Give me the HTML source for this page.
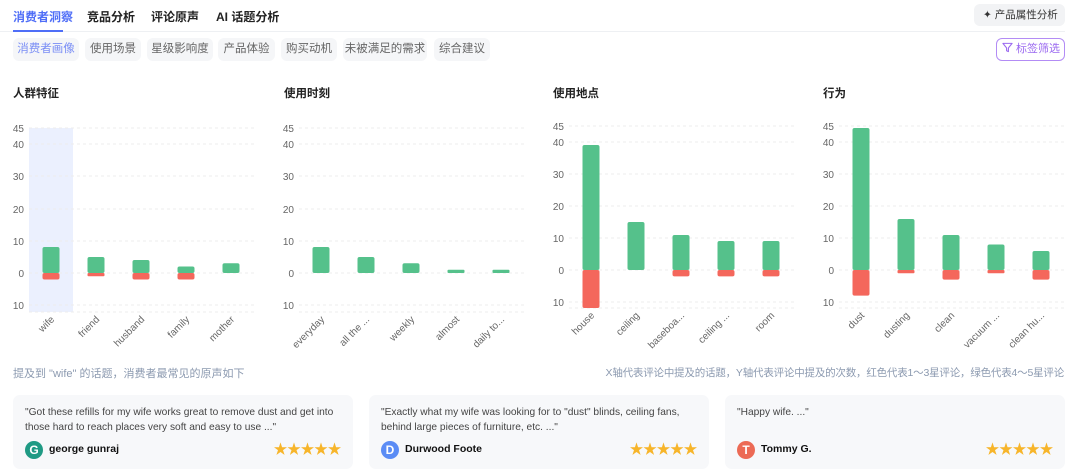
<!DOCTYPE html>
<html><head><meta charset="utf-8"><style>
*{margin:0;padding:0;box-sizing:border-box}
body{width:1080px;height:472px;background:#fff;font-family:"Liberation Sans","Noto Sans CJK SC",sans-serif;position:relative;overflow:hidden;color:#222}
.a{position:absolute;white-space:nowrap}
.tab{top:8px;font-size:12px;font-weight:bold;color:#222}
.chip{top:38px;height:23px;line-height:23px;background:#f5f6f8;border-radius:6px;font-size:11.5px;color:#666;text-align:center}
.title{top:85px;font-size:11.5px;font-weight:bold;color:#222}
.card{top:395px;height:74px;width:340px;background:#f7f8fa;border-radius:7px}
.q{position:absolute;left:12px;top:10px;font-size:10.2px;line-height:15px;color:#444;white-space:normal;width:325px}
.av{position:absolute;left:12px;top:46px;width:18px;height:18px;border-radius:50%;color:#fff;font-weight:bold;font-size:12px;text-align:center;line-height:18px}
.nm{position:absolute;left:36px;top:48px;font-size:10.5px;font-weight:bold;color:#111}
.st{position:absolute;right:12px;top:44px;font-size:14px;color:#f7b52a;letter-spacing:-0.5px}
</style></head><body>
<div class="a tab" style="left:13px;color:#4f6ef7">消费者洞察</div>
<div class="a tab" style="left:87px">竞品分析</div>
<div class="a tab" style="left:151px">评论原声</div>
<div class="a tab" style="left:216px">AI 话题分析</div>
<div class="a" style="left:0;top:31px;width:1065px;height:1px;background:#eef0f3"></div>
<div class="a" style="left:13px;top:30px;width:50px;height:2px;background:#4f6ef7"></div>
<div class="a" style="left:974px;top:4px;width:91px;height:22px;background:#f2f3f5;border-radius:6px;font-size:10.5px;line-height:22px;color:#333;padding-left:9px">✦ 产品属性分析</div>
<div class="a chip" style="left:13px;width:66px;color:#7a8ef5">消费者画像</div>
<div class="a chip" style="left:85px;width:56px">使用场景</div>
<div class="a chip" style="left:147px;width:66px">星级影响度</div>
<div class="a chip" style="left:218px;width:57px">产品体验</div>
<div class="a chip" style="left:281px;width:56px">购买动机</div>
<div class="a chip" style="left:343px;width:84px">未被满足的需求</div>
<div class="a chip" style="left:434px;width:56px">综合建议</div>
<div class="a" style="left:996px;top:38px;width:69px;height:23px;border:1px solid #b38cf5;border-radius:6px;font-size:11px;line-height:21px;color:#9b6af0;padding-left:5px">
<svg width="11" height="11" viewBox="0 0 12 12" style="vertical-align:-1px"><path d="M1 1.5H11L7 6.5V10.5L5 9.5V6.5Z" fill="none" stroke="#9b6af0" stroke-width="1.2" stroke-linejoin="round"/></svg> 标签筛选</div>
<div class="a title" style="left:13px">人群特征</div>
<div class="a title" style="left:284px">使用时刻</div>
<div class="a title" style="left:553px">使用地点</div>
<div class="a title" style="left:823px">行为</div>
<svg class="a" style="left:0;top:0" width="1080" height="360" font-family="Liberation Sans, sans-serif">
<rect x="29" y="128" width="44" height="184" fill="#ebf0fe"/>
<g stroke="#ececec" stroke-dasharray="3,3">
<path d="M29 128H255M29 144H255M29 176H255M29 209H255M29 241H255M29 273H255M29 305H255M29 312H255"/>
<path d="M299 128H525M299 144H525M299 176H525M299 209H525M299 241H525M299 273H525M299 305H525M299 312H525"/>
<path d="M569 126H795M569 142H795M569 174H795M569 206H795M569 238H795M569 270H795M569 302H795M569 308H795"/>
<path d="M839 126H1065M839 142H1065M839 174H1065M839 206H1065M839 238H1065M839 270H1065M839 302H1065M839 308H1065"/>
</g>
<g font-size="10" fill="#666" text-anchor="end">
<text x="24" y="132">45</text><text x="24" y="148">40</text><text x="24" y="180">30</text><text x="24" y="213">20</text><text x="24" y="245">10</text><text x="24" y="277">0</text><text x="24" y="309">10</text>
<text x="294" y="132">45</text><text x="294" y="148">40</text><text x="294" y="180">30</text><text x="294" y="213">20</text><text x="294" y="245">10</text><text x="294" y="277">0</text><text x="294" y="309">10</text>
<text x="564" y="130">45</text><text x="564" y="146">40</text><text x="564" y="178">30</text><text x="564" y="210">20</text><text x="564" y="242">10</text><text x="564" y="274">0</text><text x="564" y="306">10</text>
<text x="834" y="130">45</text><text x="834" y="146">40</text><text x="834" y="178">30</text><text x="834" y="210">20</text><text x="834" y="242">10</text><text x="834" y="274">0</text><text x="834" y="306">10</text>
</g>
<g fill="#55c18b">
<rect x="42.5" y="247" width="17" height="26" rx="2"/><rect x="87.5" y="257" width="17" height="16" rx="2"/><rect x="132.5" y="260" width="17" height="13" rx="2"/><rect x="177.5" y="266.5" width="17" height="6.5" rx="2"/><rect x="222.5" y="263.3" width="17" height="9.7" rx="2"/>
<rect x="312.5" y="247" width="17" height="26" rx="2"/><rect x="357.5" y="257" width="17" height="16" rx="2"/><rect x="402.5" y="263.3" width="17" height="9.7" rx="2"/><rect x="447.5" y="269.8" width="17" height="3.2" rx="1"/><rect x="492.5" y="269.8" width="17" height="3.2" rx="1"/>
<rect x="582.5" y="145" width="17" height="125" rx="2"/><rect x="627.5" y="222" width="17" height="48" rx="2"/><rect x="672.5" y="235" width="17" height="35" rx="2"/><rect x="717.5" y="241" width="17" height="29" rx="2"/><rect x="762.5" y="241" width="17" height="29" rx="2"/>
<rect x="852.5" y="128" width="17" height="142" rx="2"/><rect x="897.5" y="219" width="17" height="51" rx="2"/><rect x="942.5" y="235" width="17" height="35" rx="2"/><rect x="987.5" y="244.5" width="17" height="25.5" rx="2"/><rect x="1032.5" y="251" width="17" height="19" rx="2"/>
</g>
<g fill="#f4675c">
<rect x="42.5" y="273" width="17" height="6.5" rx="2"/><rect x="87.5" y="273" width="17" height="3.2" rx="1"/><rect x="132.5" y="273" width="17" height="6.5" rx="2"/><rect x="177.5" y="273" width="17" height="6.5" rx="2"/>
<rect x="582.5" y="270" width="17" height="38" rx="2"/><rect x="672.5" y="270" width="17" height="6.4" rx="2"/><rect x="717.5" y="270" width="17" height="6.4" rx="2"/><rect x="762.5" y="270" width="17" height="6.4" rx="2"/>
<rect x="852.5" y="270" width="17" height="25.6" rx="2"/><rect x="897.5" y="270" width="17" height="3.2" rx="1"/><rect x="942.5" y="270" width="17" height="9.6" rx="2"/><rect x="987.5" y="270" width="17" height="3.2" rx="1"/><rect x="1032.5" y="270" width="17" height="9.6" rx="2"/>
</g>
<g font-size="10" fill="#666" text-anchor="end">
<text transform="translate(55,320) rotate(-45)">wife</text><text transform="translate(100,320) rotate(-45)">friend</text><text transform="translate(145,320) rotate(-45)">husband</text><text transform="translate(190,320) rotate(-45)">family</text><text transform="translate(235,320) rotate(-45)">mother</text>
<text transform="translate(325,320) rotate(-45)">everyday</text><text transform="translate(370,320) rotate(-45)">all the ...</text><text transform="translate(415,320) rotate(-45)">weekly</text><text transform="translate(460,320) rotate(-45)">almost</text><text transform="translate(505,320) rotate(-45)">daily to...</text>
<text transform="translate(595,316) rotate(-45)">house</text><text transform="translate(640,316) rotate(-45)">ceiling</text><text transform="translate(685,316) rotate(-45)">baseboa...</text><text transform="translate(730,316) rotate(-45)">ceiling ...</text><text transform="translate(775,316) rotate(-45)">room</text>
<text transform="translate(865,316) rotate(-45)">dust</text><text transform="translate(910,316) rotate(-45)">dusting</text><text transform="translate(955,316) rotate(-45)">clean</text><text transform="translate(1000,316) rotate(-45)">vacuum ...</text><text transform="translate(1045,316) rotate(-45)">clean hu...</text>
</g>
</svg>
<div class="a" style="left:13px;top:365px;font-size:11px;color:#8c9ab0">提及到 "wife" 的话题，消费者最常见的原声如下</div>
<div class="a" style="right:16px;top:365px;font-size:10.5px;letter-spacing:-0.2px;color:#8c9ab0">X轴代表评论中提及的话题，Y轴代表评论中提及的次数，红色代表1～3星评论，绿色代表4～5星评论</div>
<div class="a card" style="left:13px"><div class="q">"Got these refills for my wife works great to remove dust and get into those hard to reach places very soft and easy to use ..."</div><div class="av" style="background:#1f9a84">G</div><div class="nm">george gunraj</div><div class="st">★★★★★</div></div>
<div class="a card" style="left:369px"><div class="q">"Exactly what my wife was looking for to "dust" blinds, ceiling fans, behind large pieces of furniture, etc. ..."</div><div class="av" style="background:#5b8cf5">D</div><div class="nm">Durwood Foote</div><div class="st">★★★★★</div></div>
<div class="a card" style="left:725px"><div class="q">"Happy wife. ..."</div><div class="av" style="background:#ec6a55">T</div><div class="nm">Tommy G.</div><div class="st">★★★★★</div></div>
</body></html>
